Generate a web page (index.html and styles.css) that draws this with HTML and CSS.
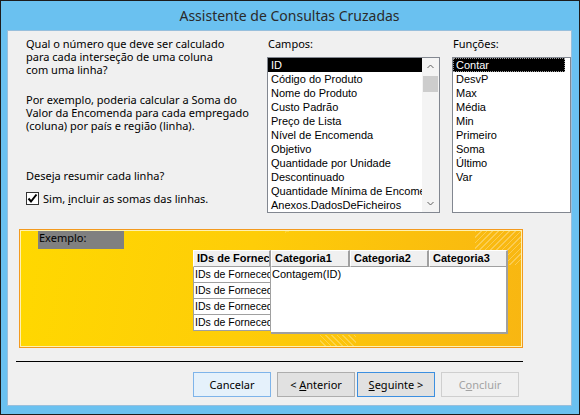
FILE: index.html
```html
<!DOCTYPE html>
<html lang="pt">

<head>
	<meta charset="UTF-8">
	<title>Assistente de Consultas Cruzadas</title>
	<link rel="stylesheet" href="styles.css">
</head>

<body>
	<div class="window">
		<div class="titlebar">Assistente de Consultas Cruzadas</div>
		<div class="client">
			<div class="top">
				<div class="intro">
					<p>Qual o número que deve ser calculado<br>para cada interseção de uma coluna<br>com uma linha?</p>
					<p class="ex">Por exemplo, poderia calcular a Soma do<br>Valor da Encomenda para cada empregado<br>(coluna) por país e região (linha).</p>
					<p class="ask">Deseja resumir cada linha?</p>
					<label class="check">
						<span class="box">
							<svg width="11" height="11" viewBox="0 0 11 11"><path d="M1.5 5.5 L4 8.5 L9.5 1.5" fill="none" stroke="#000" stroke-width="2"/></svg>
						</span>
						<span>Sim, <u>i</u>ncluir as somas das linhas.</span>
					</label>
				</div>

				<div class="col-fields">
					<div class="lbl">Campos:</div>
					<div class="listbox">
						<ul class="items">
							<li class="sel">ID</li>
							<li>Código do Produto</li>
							<li>Nome do Produto</li>
							<li>Custo Padrão</li>
							<li>Preço de Lista</li>
							<li>Nível de Encomenda</li>
							<li>Objetivo</li>
							<li>Quantidade por Unidade</li>
							<li>Descontinuado</li>
							<li>Quantidade Mínima de Encomer</li>
							<li>Anexos.DadosDeFicheiros</li>
						</ul>
						<div class="scrollbar">
							<div class="arrow">
								<svg width="7" height="5" viewBox="0 0 7 5"><path d="M0.5 4 L3.5 1 L6.5 4" fill="none" stroke="#606060"/></svg>
							</div>
							<div class="thumb"></div>
							<div class="track"></div>
							<div class="arrow">
								<svg width="7" height="5" viewBox="0 0 7 5"><path d="M0.5 1 L3.5 4 L6.5 1" fill="none" stroke="#606060"/></svg>
							</div>
						</div>
					</div>
				</div>

				<div class="col-funcs">
					<div class="lbl">Funções:</div>
					<div class="listbox">
						<ul class="items">
							<li class="sel focus">Contar</li>
							<li>DesvP</li>
							<li>Max</li>
							<li>Média</li>
							<li>Min</li>
							<li>Primeiro</li>
							<li>Soma</li>
							<li>Último</li>
							<li>Var</li>
						</ul>
					</div>
				</div>
			</div>

			<div class="sample">
				<div class="exemplo">Exemplo:</div>
				<div class="grid">
					<div class="thead">
						<div class="th c0">IDs de Fornec</div>
						<div class="th c1">Categoria1</div>
						<div class="th c2">Categoria2</div>
						<div class="th c3">Categoria3</div>
					</div>
					<div class="tbody">
						<div class="rowheads">
							<div class="rh">IDs de Forneced</div>
							<div class="rh">IDs de Forneced</div>
							<div class="rh">IDs de Forneced</div>
							<div class="rh">IDs de Forneced</div>
						</div>
						<div class="values">Contagem(ID)</div>
					</div>
				</div>
			</div>

			<hr class="sep">

			<div class="buttons">
				<button class="btn hot">Cancelar</button>
				<button class="btn prev">&lt; <u>A</u>nterior</button>
				<button class="btn next"><u>S</u>eguinte &gt;</button>
				<button class="btn off" disabled>C<u>o</u>ncluir</button>
			</div>
		</div>
	</div>
</body>

</html>
```

FILE: styles.css
```css
* {
	box-sizing: border-box;
}

body {
	margin: 0;
	font-family: "Noto Sans", "Liberation Sans", sans-serif;
	font-size: 11px;
	color: #000;
}

.window {
	width: 580px;
	height: 415px;
	border: 1px solid #1c1c1c;
	background: #6ac1f0;
	padding: 0 7px 8px 6px;
	display: flex;
	flex-direction: column;
}

.titlebar {
	height: 29px;
	line-height: 29px;
	text-align: center;
	font-size: 14px;
	color: #2a2a2a;
}

.client {
	flex: 1;
	background: #f0f0f0;
	border: 1px solid #98bfdc;
	padding-top: 6px;
}

/* partie haute : texte + listes */
.top {
	display: flex;
	height: 176px;
}

.intro {
	width: 241px;
	margin-left: 18px;
	line-height: 13px;
}

.intro p {
	margin: 0;
}

.intro .ex {
	margin-top: 17px;
}

.intro .ask {
	margin-top: 37px;
}

.check {
	display: flex;
	align-items: center;
	gap: 4px;
	height: 13px;
	margin-top: 10px;
}

.check .box {
	width: 13px;
	height: 13px;
	border: 1px solid #333;
	background: #fff;
	display: flex;
	align-items: center;
	justify-content: center;
}

.col-fields {
	width: 173px;
}

.col-funcs {
	width: 119px;
	margin-left: 12px;
}

.lbl {
	height: 13px;
	line-height: 13px;
	margin-bottom: 7px;
	padding-left: 1px;
}

.listbox {
	height: 156px;
	border: 1px solid #828790;
	background: #fff;
	display: flex;
	overflow: hidden;
}

.items {
	list-style: none;
	margin: 0;
	padding: 0;
	flex: 1;
	min-width: 0;
	font-family: "Liberation Sans", sans-serif;
	font-size: 11px;
}

.items li {
	height: 14px;
	line-height: 14px;
	padding-left: 3px;
	white-space: nowrap;
	overflow: hidden;
}

.items li.sel {
	background: #000;
	color: #fff;
}

.items li.focus {
	outline: 1px dotted #9a9a9a;
	outline-offset: -1px;
	margin-right: 5px;
}

.scrollbar {
	width: 17px;
	display: flex;
	flex-direction: column;
	background: #f4f4f4;
}

.scrollbar .arrow {
	height: 17px;
	display: flex;
	align-items: center;
	justify-content: center;
}

.scrollbar .thumb {
	height: 16px;
	margin: 1px 1px 0;
	background: #cdcdcd;
}

.scrollbar .track {
	flex: 1;
}

/* exemple jaune */
.sample {
	width: 504px;
	height: 119px;
	margin: 16px 0 0 11px;
	padding: 1px 0 0 18px;
	border: 1px solid #f39a1e;
	box-shadow: inset 0 0 0 1px #fff1b0;
	background:
		repeating-linear-gradient(135deg, rgba(255, 255, 255, .28) 0 1px, transparent 1px 4px) right 1px top 1px / 46px 34px no-repeat,
		repeating-linear-gradient(45deg, rgba(255, 255, 255, .25) 0 1px, transparent 1px 4px) 300px bottom / 36px 12px no-repeat,
		linear-gradient(160deg, rgba(255, 255, 255, .18) 0 6%, transparent 6%) 265px 1px / 40px 16px no-repeat,
		linear-gradient(100deg, #ffd800 0%, #fecd08 45%, #fbc00d 75%, #f8b612 100%);
}

.exemplo {
	width: 86px;
	height: 18px;
	background: #808080;
	line-height: 13px;
	padding-left: 1px;
}

.grid {
	margin: 1px 0 0 155px;
	font-family: "Liberation Sans", sans-serif;
	font-size: 11px;
}

.thead {
	display: flex;
	height: 17px;
}

.th {
	background: #f0f0f0;
	border-top: 1px solid #fff;
	border-left: 1px solid #fff;
	border-right: 2px solid #a0a0a0;
	border-bottom: 1px solid #a0a0a0;
	font-weight: bold;
	line-height: 14px;
	padding-left: 3px;
	white-space: nowrap;
	overflow: hidden;
}

.th.c0 {
	width: 78px;
}

.th.c1,
.th.c2,
.th.c3 {
	width: 79px;
}

.tbody {
	display: flex;
	align-items: flex-start;
}

.rowheads {
	width: 78px;
}

.rh {
	height: 16px;
	background: #fff;
	border: 1px solid #a0a0a0;
	border-top: 0;
	line-height: 14px;
	padding-left: 1px;
	font-size: 10.5px;
	white-space: nowrap;
	overflow: hidden;
}

.values {
	width: 237px;
	height: 67px;
	background: #fff;
	border-right: 2px solid #a0a0a0;
	border-bottom: 2px solid #a0a0a0;
	line-height: 14px;
	padding-left: 1px;
}

.sep {
	width: 507px;
	height: 1px;
	margin: 13px 0 0 8px;
	border: 0;
	background: #000;
}

/* boutons */
.buttons {
	display: flex;
	margin: 10px 0 0 185px;
}

.btn {
	width: 78px;
	height: 25px;
	padding: 0;
	font-family: "Noto Sans", "Liberation Sans", sans-serif;
	font-size: 11px;
	color: #000;
	background: #e1e1e1;
	border: 1px solid #adadad;
}

.btn.hot {
	background: #e5f1fb;
	border-color: #7eb4ea;
}

.btn.prev {
	margin-left: 6px;
}

.btn.next {
	margin-left: 2px;
	border-color: #3c8fe0;
}

.btn.off {
	margin-left: 6px;
	background: #f0f0f0;
	border-color: #cfcfcf;
	color: #a3a3a3;
}
```
